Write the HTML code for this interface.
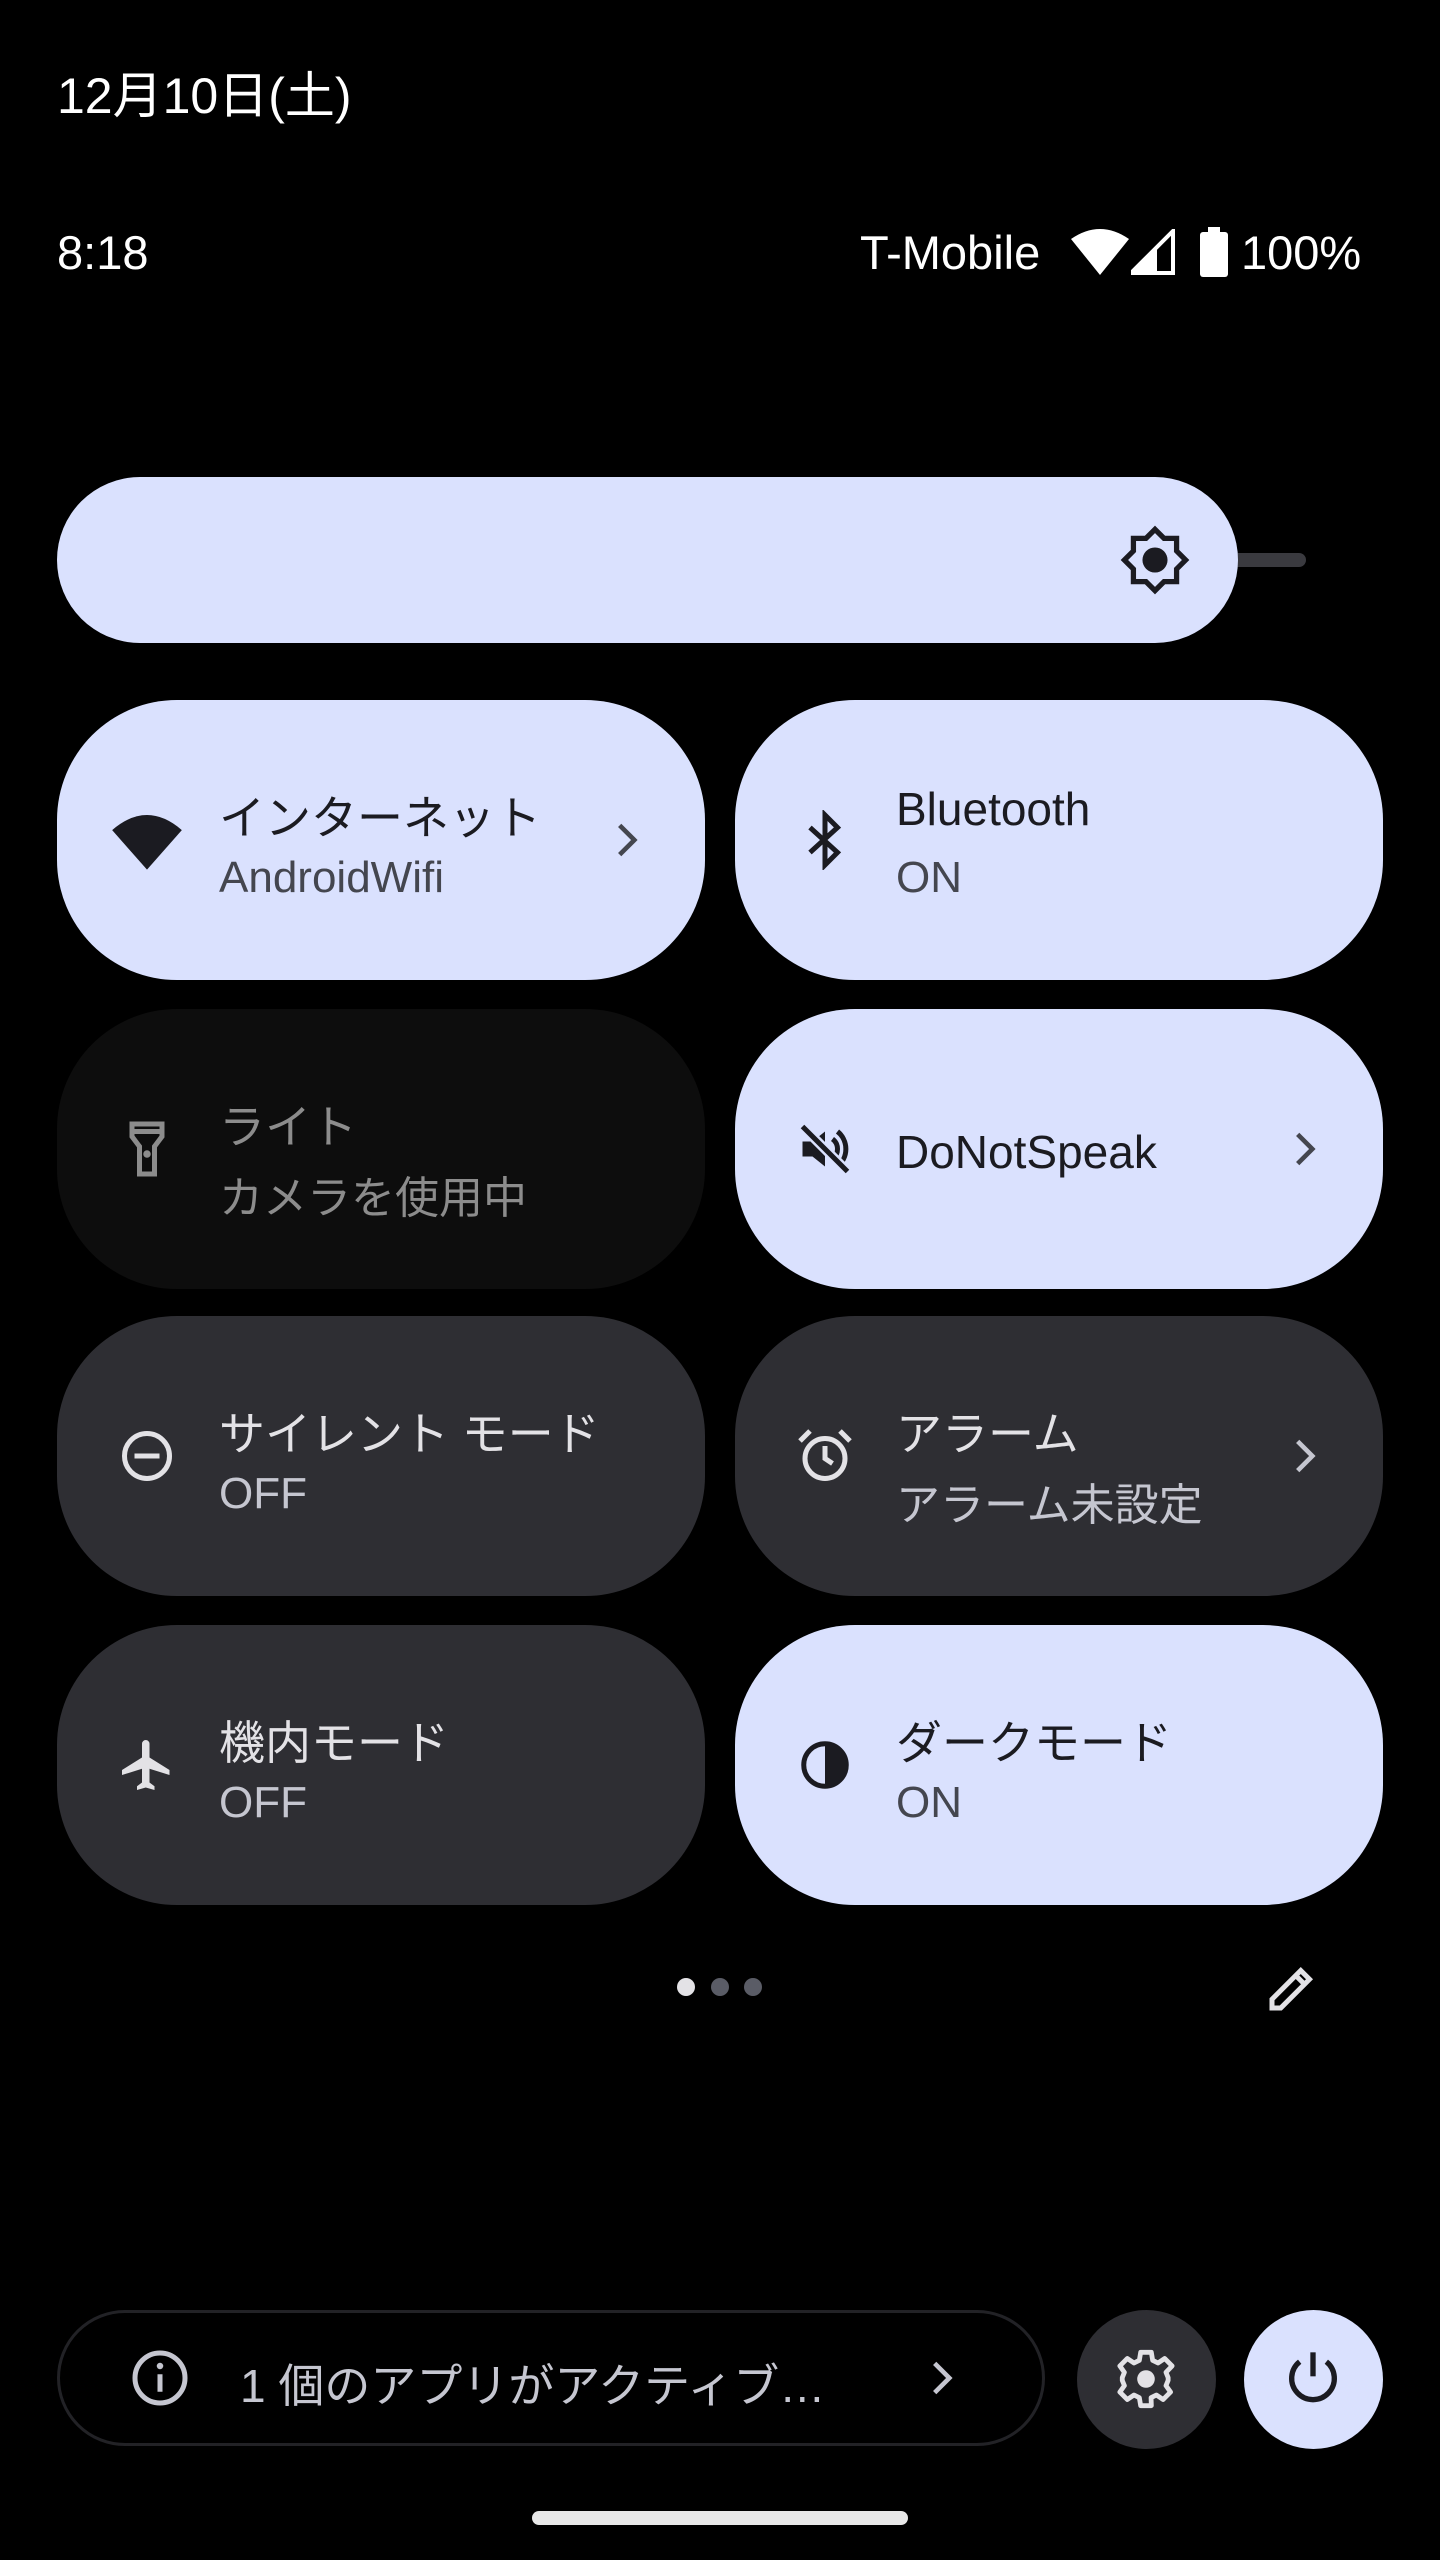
<!DOCTYPE html>
<html><head><meta charset="utf-8"><style>
*{margin:0;padding:0;box-sizing:border-box}
body{width:1440px;height:2560px;background:#000;position:relative;overflow:hidden;font-family:"Liberation Sans","Noto Sans CJK JP",sans-serif;color:#fff}
.abs{position:absolute}
.tile{position:absolute;width:648px;height:280px;border-radius:120px}
.on{background:#dae1fe;color:#1b1b21}
.off{background:#2e2e33;color:#e3e2e6}
.na{background:#0d0d0d;color:#8c8c8c}
.t1{position:absolute;font-size:46px;top:82px;white-space:nowrap}
.t2{position:absolute;font-size:44px;top:153px;white-space:nowrap}
.on .t2{color:#44464f}.off .t2{color:#c5c6d0}
.ic{position:absolute;left:60px;top:110px;width:60px;height:60px}
.chev{position:absolute;top:118px;width:44px;height:44px}
</style></head><body>
<div class="abs" style="left:57px;top:56px;font-size:50px">12月10日(土)</div>
<div class="abs" style="left:57px;top:225px;font-size:47px">8:18</div>
<div class="abs" style="left:860px;top:225px;font-size:47px">T-Mobile</div>
<svg class="abs" style="left:1071px;top:229px" width="58" height="46" viewBox="0 0 58 46"><path d="M0 10Q29-10 58 10L29 46Z" fill="#fff"/></svg>
<svg class="abs" style="left:1131px;top:229px" width="44" height="46" viewBox="0 0 44 46"><path d="M42 2V44H0Z" fill="none" stroke="#fff" stroke-width="4"/><path d="M26 18V44H0Z" fill="#fff"/></svg>
<svg class="abs" style="left:1200px;top:227px" width="28" height="50" viewBox="0 0 28 50"><rect x="8" y="0" width="12" height="6" fill="#fff"/><rect x="0" y="5" width="28" height="45" rx="3" fill="#fff"/></svg>
<div class="abs" style="left:1241px;top:225px;font-size:47px">100%</div>

<div class="abs" style="left:1230px;top:553px;width:76px;height:14px;border-radius:7px;background:#3a3a3f"></div>
<div class="abs" style="left:57px;top:477px;width:1181px;height:166px;border-radius:83px;background:#dae1fe"></div>
<svg class="abs" style="left:1120px;top:525px" width="70" height="70" viewBox="0 0 24 24"><path d="M12 1.5l3.1 3.1h4.3v4.3L22.5 12l-3.1 3.1v4.3h-4.3L12 22.5l-3.1-3.1H4.6v-4.3L1.5 12l3.1-3.1V4.6h4.3z" fill="none" stroke="#1b1b21" stroke-width="1.8"/><circle cx="12" cy="12" r="4.3" fill="#1b1b21"/></svg>

<div class="tile on" style="left:57px;top:700px">
<svg class="ic" viewBox="0 0 24 24" style="left:52px;top:100px;width:76px;height:76px"><path d="M1 9.5Q12 0 23 9.5L12 22Z" fill="#1b1b21"/></svg>
<div class="t1" style="left:162px">インターネット</div><div class="t2" style="left:162px">AndroidWifi</div>
<svg class="chev" style="left:548px" viewBox="0 0 24 24"><path d="M8 4l8 8-8 8" fill="none" stroke="#44464f" stroke-width="2.5"/></svg></div>
<div class="tile on" style="left:735px;top:700px">
<svg class="ic" viewBox="0 0 24 24"><path d="M6 7l11 10-5 5V2l5 5L6 17" fill="none" stroke="#1b1b21" stroke-width="2"/></svg>
<div class="t1" style="left:161px">Bluetooth</div><div class="t2" style="left:161px">ON</div></div>

<div class="tile na" style="left:57px;top:1009px">
<svg class="ic" viewBox="0 0 24 24"><path d="M6 2h12v5l-3 4v11H9V11L6 7z M6 5h12" fill="none" stroke="#8c8c8c" stroke-width="2"/><circle cx="12" cy="14" r="1.5" fill="#8c8c8c"/></svg>
<div class="t1" style="left:162px">ライト</div><div class="t2" style="left:162px;color:#8c8c8c">カメラを使用中</div></div>
<div class="tile on" style="left:735px;top:1009px">
<svg class="ic" viewBox="0 0 24 24"><path d="M3 9h4l5-4v14l-5-4H3z" fill="#1b1b21"/><path d="M15 8a5 5 0 0 1 0 8M17 5a9 9 0 0 1 0 14" fill="none" stroke="#1b1b21" stroke-width="2"/><path d="M3 3l18 18" stroke="#dae1fe" stroke-width="4"/><path d="M3 3l18 18" stroke="#1b1b21" stroke-width="2"/></svg>
<div class="t1" style="left:161px;top:116px">DoNotSpeak</div>
<svg class="chev" style="left:548px" viewBox="0 0 24 24"><path d="M8 4l8 8-8 8" fill="none" stroke="#44464f" stroke-width="2.5"/></svg></div>

<div class="tile off" style="left:57px;top:1316px">
<svg class="ic" viewBox="0 0 24 24"><circle cx="12" cy="12" r="9" fill="none" stroke="#e3e2e6" stroke-width="2"/><path d="M7 12h10" stroke="#e3e2e6" stroke-width="2"/></svg>
<div class="t1" style="left:162px">サイレント モード</div><div class="t2" style="left:162px">OFF</div></div>
<div class="tile off" style="left:735px;top:1316px">
<svg class="ic" viewBox="0 0 24 24"><circle cx="12" cy="13" r="8" fill="none" stroke="#e3e2e6" stroke-width="2"/><path d="M12 8v5l3 2M2 6l4-4M22 6l-4-4" fill="none" stroke="#e3e2e6" stroke-width="2"/></svg>
<div class="t1" style="left:161px">アラーム</div><div class="t2" style="left:161px">アラーム未設定</div>
<svg class="chev" style="left:548px" viewBox="0 0 24 24"><path d="M8 4l8 8-8 8" fill="none" stroke="#c5c6d0" stroke-width="2.5"/></svg></div>

<div class="tile off" style="left:57px;top:1625px">
<svg class="ic" viewBox="0 0 24 24"><path d="M21 16v-2l-8-5V3.5a1.5 1.5 0 0 0-3 0V9l-8 5v2l8-2.5V19l-2 1.5V22l3.5-1 3.5 1v-1.5L13 19v-5.5z" fill="#e3e2e6"/></svg>
<div class="t1" style="left:162px">機内モード</div><div class="t2" style="left:162px">OFF</div></div>
<div class="tile on" style="left:735px;top:1625px">
<svg class="ic" viewBox="0 0 24 24"><circle cx="12" cy="12" r="8.5" fill="none" stroke="#1b1b21" stroke-width="2"/><path d="M12 3.5a8.5 8.5 0 0 1 0 17z" fill="#1b1b21"/></svg>
<div class="t1" style="left:161px">ダークモード</div><div class="t2" style="left:161px">ON</div></div>

<div class="abs" style="left:677px;top:1978px;width:18px;height:18px;border-radius:9px;background:#e3e2e6"></div>
<div class="abs" style="left:711px;top:1978px;width:18px;height:18px;border-radius:9px;background:#5a5c66"></div>
<div class="abs" style="left:744px;top:1978px;width:18px;height:18px;border-radius:9px;background:#5a5c66"></div>
<svg class="abs" style="left:1262px;top:1958px" width="60" height="60" viewBox="0 0 24 24"><path d="M4 20v-3.5L15.5 5l3.5 3.5L7.5 20z M13.5 7l3.5 3.5" fill="none" stroke="#e3e2e6" stroke-width="2"/></svg>

<div class="abs" style="left:57px;top:2310px;width:988px;height:136px;border-radius:68px;border:3px solid #222226"></div>
<svg class="abs" style="left:130px;top:2348px" width="60" height="60" viewBox="0 0 24 24"><circle cx="12" cy="12" r="10" fill="none" stroke="#c5c6d0" stroke-width="2"/><path d="M12 10.5v7" stroke="#c5c6d0" stroke-width="2"/><circle cx="12" cy="7.2" r="1.3" fill="#c5c6d0"/></svg>
<div class="abs" style="left:240px;top:2350px;font-size:46px;color:#c5c6d0;white-space:nowrap">1 個のアプリがアクティブ…</div>
<svg class="abs" style="left:920px;top:2356px" width="44" height="44" viewBox="0 0 24 24"><path d="M8 4l8 8-8 8" fill="none" stroke="#c5c6d0" stroke-width="2.5"/></svg>
<div class="abs" style="left:1077px;top:2310px;width:139px;height:139px;border-radius:70px;background:#2e2e33"></div>
<svg class="abs" style="left:1114px;top:2347px" width="64" height="64" viewBox="0 0 24 24"><path d="M10 2h4l.5 3 2 1 2.5-1.7 2.8 2.8L19.5 9.5l.8 2v1l-.8 2 1.7 2.4-2.8 2.8-2.5-1.7-2 1L14 22h-4l-.5-3-2-1-2.5 1.7-2.8-2.8 1.7-2.4-.8-2v-1l.8-2L2.2 7.1 5 4.3 7.5 6l2-1z" fill="none" stroke="#e3e2e6" stroke-width="1.8" stroke-linejoin="round"/><circle cx="12" cy="12" r="3.3" fill="#e3e2e6"/></svg>
<div class="abs" style="left:1244px;top:2310px;width:139px;height:139px;border-radius:70px;background:#dae1fe"></div>
<svg class="abs" style="left:1281px;top:2347px" width="64" height="64" viewBox="0 0 24 24"><path d="M12 2v9" stroke="#1b1b21" stroke-width="2"/><path d="M7 5.5a8 8 0 1 0 10 0" fill="none" stroke="#1b1b21" stroke-width="2"/></svg>
<div class="abs" style="left:532px;top:2511px;width:376px;height:14px;border-radius:7px;background:#e8e8e8"></div>
</body></html>
